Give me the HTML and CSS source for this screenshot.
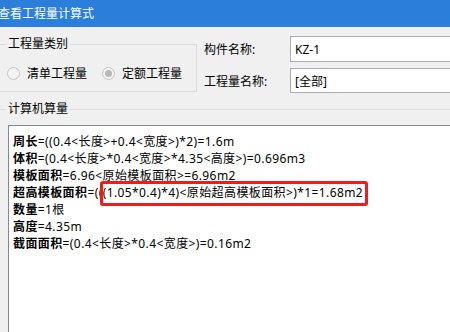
FILE: index.html
```html
<!DOCTYPE html>
<html lang="zh-CN">
<head>
  <meta charset="UTF-8" />
  <title>查看工程量计算式</title>
  <link rel="stylesheet" href="styles.css">
</head>
<body>
  <div class="window">
    <div class="titlebar">查看工程量计算式</div>

    <div class="top">
      <fieldset class="group kind">
        <legend>工程量类别</legend>
        <div class="radios">
          <label class="radio"><span class="dot"></span>清单工程量</label>
          <label class="radio"><span class="dot checked"></span>定额工程量</label>
        </div>
      </fieldset>

      <div class="fields">
        <span class="field-label">构件名称:</span>
        <div class="input">KZ-1</div>
        <span class="field-label">工程量名称:</span>
        <div class="input">[全部]</div>
      </div>
    </div>

    <fieldset class="group calc">
      <legend>计算机算量</legend>
      <div class="result">
        <p><b>周长</b>=((0.4&lt;长度&gt;+0.4&lt;宽度&gt;)*2)=1.6m</p>
        <p><b>体积</b>=(0.4&lt;长度&gt;*0.4&lt;宽度&gt;*4.35&lt;高度&gt;)=0.696m3</p>
        <p><b>模板面积</b>=6.96&lt;原始模板面积&gt;=6.96m2</p>
        <p><b>超高模板面积</b>=((<span class="hl">(1.05*0.4)*4)&lt;原始超高模板面积&gt;)*1=1.68m2</span></p>
        <p><b>数量</b>=1根</p>
        <p><b>高度</b>=4.35m</p>
        <p><b>截面面积</b>=(0.4&lt;长度&gt;*0.4&lt;宽度&gt;)=0.16m2</p>
      </div>
    </fieldset>
  </div>
</body>
</html>
```

FILE: styles.css
```css
body {
  margin: 0;
  background: #f0f0f0;
  font-family: "Noto Sans", "Noto Sans CJK SC", sans-serif;
  font-size: 12px;
  color: #000;
  overflow: hidden;
}

.window {
  width: 450px;
  height: 332px;
  overflow: hidden;
}

.titlebar {
  height: 27px;
  line-height: 27px;
  background: #2b7fdb;
  color: #fff;
  text-indent: -2px;
  white-space: nowrap;
}

.top {
  display: flex;
  align-items: flex-start;
  margin-top: 9px;
}

.group {
  margin: 0 0 0 -6px;
  border: 1px solid #dcdcdc;
  padding: 0 0 0 11px;
  min-width: 0;
}

.group legend {
  padding: 0 2px;
  line-height: 16px;
  height: 16px;
}

.kind {
  flex: none;
  box-sizing: border-box;
  width: 203px;
  padding-top: 13px;
  padding-bottom: 10px;
}

.radios {
  display: flex;
  height: 16px;
  align-items: center;
  white-space: nowrap;
}

.radio {
  display: flex;
  align-items: center;
  margin-right: 14px;
}

.dot {
  width: 11px;
  height: 11px;
  border: 1px solid #c4c4c4;
  border-radius: 50%;
  background: #f4f4f4;
  margin: 0 7px 0 1px;
  position: relative;
}

.dot.checked::after {
  content: "";
  position: absolute;
  left: 2px;
  top: 2px;
  width: 7px;
  height: 7px;
  border-radius: 50%;
  background: #b8b8b8;
}

.fields {
  flex: none;
  display: grid;
  grid-template-columns: 86px 200px;
  grid-template-rows: 26px 25px;
  row-gap: 6px;
  align-items: center;
  margin: 0 0 0 7px;
}

.field-label {
  white-space: nowrap;
}

.input {
  height: 100%;
  box-sizing: border-box;
  border: 1px solid #abadb3;
  background: #fff;
  padding-left: 4px;
  display: flex;
  align-items: center;
}

.calc {
  margin-top: 8px;
  width: 500px;
  padding-right: 0;
}

.result {
  margin: 8px 0 0 2px;
  height: 260px;
  border: 1px solid #828790;
  background: #fff;
  padding: 7px 0 0 4px;
  white-space: nowrap;
}

.result p {
  margin: 0;
  line-height: 17px;
  letter-spacing: 0.4px;
}

.hl {
  position: relative;
}

.hl::after {
  content: "";
  position: absolute;
  left: -3px;
  right: -5px;
  top: -3px;
  bottom: -5px;
  border: 3px solid #f01c1c;
  border-radius: 3px;
}
```
